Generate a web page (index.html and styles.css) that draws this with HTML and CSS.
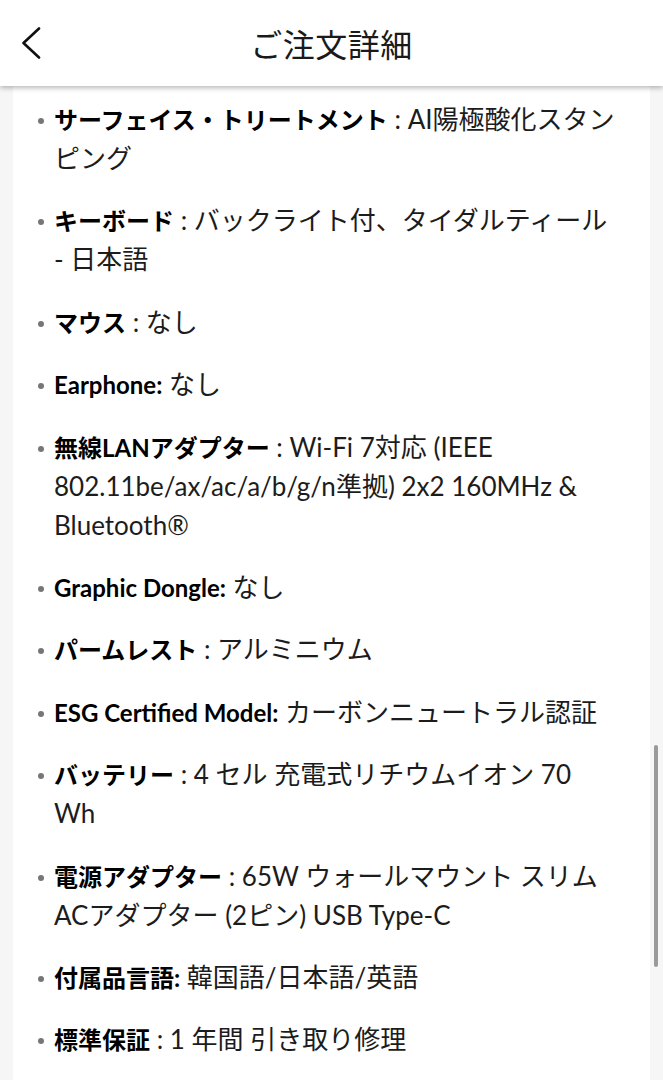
FILE: index.html
```html
<!DOCTYPE html>
<html lang="ja">
<head>
<meta charset="utf-8">
<link rel="stylesheet" href="styles.css">
</head>
<body>
<header class="topbar">
  <div class="back">
    <svg width="22" height="32" viewBox="0 0 22 32"><path d="M19 1.5 L3.5 16 L19 30.5" fill="none" stroke="#111" stroke-width="2.6" stroke-linecap="round" stroke-linejoin="round"/></svg>
  </div>
  <h1 class="title">ご注文詳細</h1>
  <div></div>
</header>
<main class="card">
  <ul class="specs">
    <li><b>サーフェイス・トリートメント</b> : AI陽極酸化スタンピング</li>
    <li><b>キーボード</b> : バックライト付、タイダルティール - 日本語</li>
    <li><b>マウス</b> : なし</li>
    <li><b>Earphone:</b> なし</li>
    <li><b>無線LANアダプター</b> : Wi-Fi 7対応 (IEEE 802.11be/ax/ac/a/b/g/n準拠) 2x2 160MHz &amp; Bluetooth®</li>
    <li><b>Graphic Dongle:</b> なし</li>
    <li><b>パームレスト</b> : アルミニウム</li>
    <li><b>ESG Certified Model:</b> カーボンニュートラル認証</li>
    <li><b>バッテリー</b> : 4 セル 充電式リチウムイオン 70 Wh</li>
    <li><b>電源アダプター</b> : 65W ウォールマウント スリム ACアダプター (2ピン) USB Type-C</li>
    <li><b>付属品言語:</b> 韓国語/日本語/英語</li>
    <li><b>標準保証</b> : 1 年間 引き取り修理</li>
  </ul>
</main>
<div class="scrollbar"></div>
</body>
</html>
```
FILE: styles.css
```css
html, body {
  margin: 0;
  padding: 0;
}
body {
  background: #f6f6f6;
  font-family: Lato, "Noto Sans CJK JP", sans-serif;
  color: #1c1c1c;
  width: 663px;
  height: 1080px;
  overflow: hidden;
  position: relative;
}
.topbar {
  position: relative;
  z-index: 2;
  height: 86px;
  background: #fff;
  box-shadow: 0 2px 5px rgba(0, 0, 0, 0.28);
  display: grid;
  grid-template-columns: 1fr auto 1fr;
  align-items: center;
}
.back {
  padding-left: 20px;
  display: flex;
  align-items: center;
  height: 32px;
}
.title {
  margin: 0;
  font-family: "Noto Sans CJK JP", sans-serif;
  font-weight: 400;
  font-size: 32px;
  letter-spacing: 0.5px;
  color: #1a1a1a;
}
.card {
  margin: 0 13px;
  background: #fff;
  padding: 14px 35px 40px 41px;
  height: 1000px;
}
.specs {
  list-style: none;
  margin: 0;
  padding: 0;
  display: flex;
  flex-direction: column;
  gap: 23.4px;
}
.specs li {
  position: relative;
  font-size: 26px;
  line-height: 39px;
}
.specs li::before {
  content: "";
  position: absolute;
  left: -16px;
  top: 18px;
  width: 6px;
  height: 6px;
  border-radius: 50%;
  background: #767676;
}
.specs b {
  font-weight: 700;
  font-size: 24px;
  color: #000;
}
.scrollbar {
  position: absolute;
  right: 5px;
  top: 745px;
  width: 4px;
  height: 222px;
  border-radius: 2px;
  background: #9a9a9a;
}
```
